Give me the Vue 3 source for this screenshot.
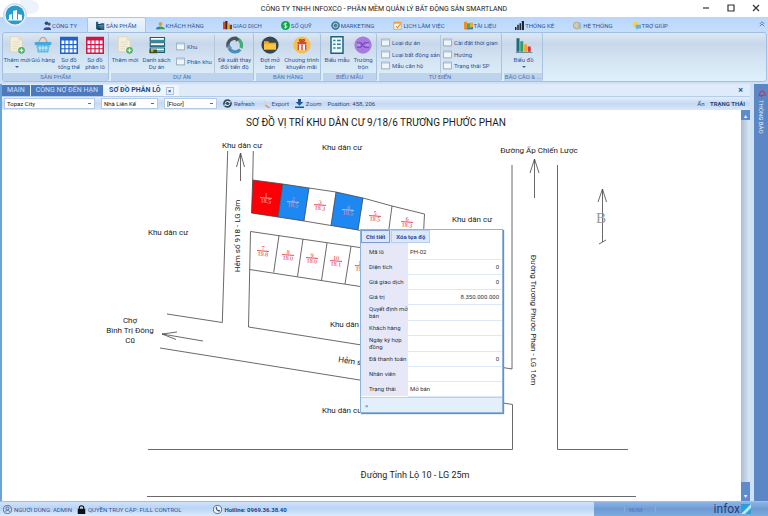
<script setup>
import { ref } from 'vue'

const icons = {
  people: '<circle cx="6" cy="3" r="2.4" fill="#3a3f78"/><path d="M2 12c0-5 8-5 8 0z" fill="#2f4f9c"/><circle cx="9.5" cy="4" r="2" fill="#5b4a60"/><path d="M6 12c0-5 6-5 6 0z" fill="#34477e"/>',
  building: '<path d="M0 1h3v10H0z" fill="#2b5f86"/><path d="M2 4h5v8H2z" fill="#173a55"/><path d="M6 3h5v9H6z" fill="#24607c"/><path d="M3 6h7M3 8h7" stroke="#5aa3bd"/>',
  customer: '<circle cx="6" cy="4" r="2.6" fill="#d9a13a"/><path d="M0 11c1-5 11-5 12 0z" fill="#3f9a4a"/><path d="M0 11c0-3 3-4 5-3v3z" fill="#2c7fc0"/>',
  books: '<path d="M0 1h3v10H0z" fill="#d84a1e"/><path d="M3 0h3v11H3z" fill="#2b2b32"/><path d="M6 3h3v8H6z" fill="#f0a325"/><path d="M9 5h3v6H9z" fill="#7a3f1d"/>',
  money: '<circle cx="6" cy="6" r="6" fill="#16a34a"/><path d="M8 4c-1-1.500-4-1-4 .5S8 6 8 7.500 5 9.500 4 8M6 2v8" stroke="#fff" fill="none"/>',
  globe: '<circle cx="6" cy="6" r="5.500" fill="#4b7f96"/><circle cx="6" cy="6" r="3" fill="none" stroke="#b5dcca" stroke-width="1.200"/><circle cx="6" cy="6" r="5" fill="none" stroke="#3a6377" stroke-dasharray="2 1"/>',
  calendar: '<path d="M1 2h10v9H1z" fill="#f5f1dc" stroke="#a5a58a"/><path d="M1 1h10v2.500H1z" fill="#e5a238"/><path d="M4 7l2 2 4-5" stroke="#d9822b" fill="none" stroke-width="1.400"/>',
  docs: '<path d="M0 1h4v10H0z" fill="#e98f2c"/><path d="M4 3h4v8H4z" fill="#55a651"/><path d="M8 2h4v9H8z" fill="#d6b42f"/><path d="M1 11h11V8z" fill="#3d72b5"/>',
  bars: '<path d="M0 8h2v4H0zM3 5h2v7H3zM6 3h2v9H6zM9 0h3v12H9z" fill="#1c2733"/>',
  gear: '<circle cx="5" cy="6" r="4.500" fill="#d8cba2" stroke="#9a9886"/><path d="M7 1l4 2v7l-4 1z" fill="#a9b8c8"/>',
  help: '<circle cx="5" cy="5" r="4" fill="#f6d24a"/><path d="M5 5h7v5H8l-2 2V10H5z" fill="#62b3df"/>',
  docAdd: '<path d="M3 1h11l5 5v15H3z" fill="#f3efda" stroke="#d8d2b6"/><path d="M14 1v5h5" fill="#e3dcc0"/><path d="M6 8h9M6 11h10M6 14h8M6 17h6" stroke="#ddd6bd"/><circle cx="18" cy="19" r="4.500" fill="#52b167"/><path d="M18 16.500v5M15.500 19h5" stroke="#fff" stroke-width="1.500"/>',
  basket: '<path d="M5 10L10 2h4l5 8" fill="none" stroke="#d99a5b" stroke-width="1.600"/><path d="M1 8h22v4H1z" fill="#49a9d6"/><path d="M3 12h18l-2 10H5z" fill="#5fbce4"/><path d="M8 13v7M12 13v7M16 13v7M5 16h14" stroke="#d8f1fb" stroke-width="1.200"/>',
  gridBlue: '<path d="M1 2h22v21H1z" fill="#fff" stroke="#1e62c8" stroke-width="2"/><path d="M1 2h22v4H1z" fill="#1e62c8"/><path d="M6.500 4v19M12 4v19M17.500 4v19M1 11.500h22M1 17h22" stroke="#1e62c8" stroke-width="1.500"/>',
  gridRed: '<path d="M1 2h22v21H1z" fill="#fff" stroke="#cf1447" stroke-width="2"/><path d="M1 2h22v4H1z" fill="#cf1447"/><path d="M6.500 4v19M12 4v19M17.500 4v19M1 11.500h22M1 17h22" stroke="#cf1447" stroke-width="1.500"/>',
  list: '<path d="M3 2h19v5H3zM3 9h19v5H3zM3 16h19v6H3z" fill="#fff" stroke="#1d5a70" stroke-width="1.500"/><path d="M4 6h18M4 13h18M4 20h18" stroke="#2793a8" stroke-width="2"/><path d="M2 18h10v5H2z" fill="#3b5426"/><path d="M4 18h3v3H4z" fill="#d9b23b"/>',
  cycle: '<g fill="none" stroke-width="4.500"><path d="M3 15A9 9 0 0 1 14 3.500" stroke="#4a5560"/><path d="M15 4a9 9 0 0 1 5 12" stroke="#3cae76"/><path d="M19 18A9 9 0 0 1 4 16" stroke="#4b8fb8"/></g><path d="M13 0l5 4-5 4z" fill="#4a5560"/><path d="M1 15l3-4 4 5z" fill="#4b8fb8"/>',
  sale: '<circle cx="12" cy="12" r="11.500" fill="#37474f"/><path d="M4 7h6l1 2h9v9H4z" fill="#f6a821"/><path d="M4 11h16v7H4z" fill="#ffc53d"/>',
  gift: '<circle cx="12" cy="12" r="11.500" fill="#f6c04c"/><path d="M6 10h12v9H6z" fill="#fff"/><path d="M6 8h12v3H6z" fill="#d84b3a"/><path d="M6 11h2v8H6zM11 11h2v8h-2zM16 11h2v8h-2z" fill="#d84b3a"/><path d="M12 8c-5-1-4-5 0-2 4-3 5 1 0 2z" fill="none" stroke="#b5352b" stroke-width="1.500"/>',
  form: '<path d="M4 1h16v22H4z" fill="#eaf7fa" stroke="#20617a" stroke-width="2"/><path d="M7 6h3M12 6h5M7 11h3M12 11h5M7 16h3M12 16h5" stroke="#2b8199" stroke-width="1.800"/>',
  merge: '<circle cx="12" cy="12" r="11.500" fill="#a77be0"/><path d="M4 9h5l5 6h6M4 15h5l5-6h6" stroke="#7346b8" stroke-width="1.600" fill="none"/><path d="M4 12h4M16 12h4" stroke="#d8c4f5"/>',
  chart: '<path d="M2 3h4v18H2z" fill="#1c6b7a"/><path d="M7 7h4v14H7z" fill="#2f9e6b"/><path d="M12 11h4v10h-4z" fill="#f2a33a"/><path d="M17 14h4v7h-4z" fill="#d8382e"/><path d="M1 22h22" stroke="#50708a"/>',
  window: '<path d="M.5 1.500h11v9H.5z" fill="#f0f5fa" stroke="#7f95ad"/><path d="M1 2h10v1.500H1z" fill="#b9cbe0"/>',
  refresh: '<circle cx="6" cy="6" r="5.800" fill="#2e4f66"/><path d="M3 6a3 3 0 0 1 5-2M9 6a3 3 0 0 1-5 2" stroke="#fff" fill="none" stroke-width="1.300"/><path d="M7 5h3V2zM5 7H2v3z" fill="#fff"/>',
  export: '<path d="M4 1l6 9-6-1z" fill="#cfd6dd"/><path d="M6 8l3 3h3" stroke="#e08a3a" stroke-width="1.500" fill="none"/>',
  download: '<path d="M4 0h4v4h3L6 9 1 4h3z" fill="#1c5a96"/><path d="M0 10h12v2H0z" fill="#1c5a96"/>',
  user: '<circle cx="6" cy="6" r="5.400" fill="none" stroke="#3d5878" stroke-width="1"/><circle cx="6" cy="4.500" r="2" fill="none" stroke="#3d5878"/><path d="M2.500 9.500c1-3 6-3 7 0" fill="none" stroke="#3d5878"/>',
  lock: '<path d="M1 5h10v7H1z" fill="#111"/><path d="M3 6V4a3 3 0 0 1 6 0v2" fill="none" stroke="#111" stroke-width="1.500"/>',
  phone: '<circle cx="6" cy="6" r="5.400" fill="#eef5fc" stroke="#2c4a6c"/><path d="M3.500 3c0 3 2 5.500 5 6l1-1.600-1.700-1-.8.700C6 6.600 5.300 5.800 5 5l.8-.8L5 2.500z" fill="#2c4a6c"/>',
  bell: '<path d="M2 9c2-1 1-5 4-6s4 3 6 5z" fill="none" stroke="#d0305e" stroke-width="1.500"/><path d="M5 10l2 1" stroke="#d0305e" stroke-width="1.500"/>',
}

const tabs = [
  ['people', 'CÔNG TY'], ['building', 'SẢN PHẨM'], ['customer', 'KHÁCH HÀNG'], ['books', 'GIAO DỊCH'],
  ['money', 'SỔ QUỸ'], ['globe', 'MARKETING'], ['calendar', 'LỊCH LÀM VIỆC'], ['docs', 'TÀI LIỆU'],
  ['bars', 'THỐNG KÊ'], ['gear', 'HỆ THỐNG'], ['help', 'TRỢ GIÚP'],
]
const activeTab = ref('SẢN PHẨM')

const big = (icon, lines, o = {}) => ({ icon, lines, ...o })
const groups = [
  { title: 'SẢN PHẨM', items: [
    big('docAdd', ['Thêm mới'], { menu: true }), big('basket', ['Giỏ hàng']),
    big('gridBlue', ['Sơ đồ', 'tổng thể']), big('gridRed', ['Sơ đồ', 'phân lô'])] },
  { title: 'DỰ ÁN', items: [
    big('docAdd', ['Thêm mới']), big('list', ['Danh sách', 'Dự án'], { wide: true }),
    { stack: ['Khu', 'Phân khu'] }, { sep: true },
    big('cycle', ['Đề xuất thay', 'đổi tiến độ'], { wide: true })] },
  { title: 'BÁN HÀNG', items: [
    big('sale', ['Đợt mở', 'bán']), big('gift', ['Chương trình', 'khuyến mãi'], { wide: true })] },
  { title: 'BIỂU MẪU', items: [big('form', ['Biểu mẫu']), big('merge', ['Trường', 'trộn'])] },
  { title: 'TỪ ĐIỂN', items: [
    { stack: ['Loại dự án', 'Loại bất động sản', 'Mẫu căn hộ'], wide: true }, { sep: true },
    { stack: ['Cài đặt thời gian', 'Hướng', 'Trạng thái SP'], wide: true }] },
  { title: 'BÁO CÁO & ...', items: [big('chart', ['Biểu đồ'], { menu: true, wide: true })] },
]

const lots = [
  { n: 1, area: '18.5', x: 266, y: 198, tone: 'on-red' },
  { n: 2, area: '18.5', x: 293, y: 202, tone: 'on-blue' },
  { n: 3, area: '18.3', x: 320, y: 205, tone: 'plain' },
  { n: 4, area: '18.5', x: 348, y: 210, tone: 'on-blue' },
  { n: 5, area: '18.5', x: 375, y: 216, tone: 'plain' },
  { n: 6, area: '18.3', x: 407, y: 222, tone: 'plain' },
  { n: 7, area: '19.8', x: 263, y: 251, tone: 'plain' },
  { n: 8, area: '18.0', x: 288, y: 255, tone: 'plain' },
  { n: 9, area: '18.0', x: 312, y: 258, tone: 'plain' },
  { n: 10, area: '18.1', x: 336, y: 261, tone: 'plain' },
  { n: 11, area: '19.8', x: 361, y: 266, tone: 'plain' },
]

const details = [
  ['Mã lô', 'PH-02'], ['Diện tích', '0', 1], ['Giá giao dịch', '0', 1], ['Giá trị', '8.350.000.000', 1],
  ['Quyết định mở bán', ''], ['Khách hàng', ''], ['Ngày ký hợp đồng', ''],
  ['Đã thanh toán', '0', 1], ['Nhân viên', ''], ['Trạng thái', 'Mở bán'],
]
</script>

<template>
  <div class="app">
    <header class="titlebar">
      <h1>CÔNG TY TNHH INFOXCO - PHẦN MỀM QUẢN LÝ BẤT ĐỘNG SẢN SMARTLAND</h1>
      <div class="winbtns">
        <button aria-label="Minimize"><svg viewBox="0 0 10 10"><path d="M2.500 5h5" /></svg></button>
        <button aria-label="Maximize"><svg viewBox="0 0 10 10"><path d="M2.500 2.500h5v5h-5z" /></svg></button>
        <button aria-label="Close"><svg viewBox="0 0 10 10"><path d="M2.500 2.500l5 5M7.500 2.500l-5 5" /></svg></button>
      </div>
      <button class="orb" aria-label="SmartLand">
        <svg viewBox="0 0 40 28">
          <path d="M20 0h10a9 7 0 0 1 0 14H20z" fill="#edf3fa" />
          <circle cx="15" cy="15" r="12" fill="#d3deea" />
          <circle cx="15" cy="15" r="10.500" fill="#f4f9fc" />
          <circle cx="15" cy="15" r="9.500" fill="#2a9ccc" />
          <path d="M9 15l3-1v6H9zM13 11l4-1v10h-4zM18 14l4 1v5h-4z" fill="#fff" />
          <path d="M8 20h14" stroke="#fff" />
        </svg>
      </button>
    </header>

    <nav class="tabs">
      <button v-for="[icon, label] in tabs" :key="label" :class="{ active: label === activeTab }" @click="activeTab = label">
        <svg class="i9" viewBox="0 0 12 12" v-html="icons[icon]" />{{ label }}
      </button>
      <span class="collapse"><svg viewBox="0 0 8 8"><path d="M1 4l3-3 3 3M1 7l3-3 3 3" /></svg></span>
    </nav>

    <section class="ribbon">
      <div v-for="g in groups" :key="g.title" class="group">
        <div class="items">
          <template v-for="(it, i) in g.items" :key="i">
            <span v-if="it.sep" class="sep" />
            <div v-else-if="it.stack" class="stack" :class="{ roomy: it.wide }">
              <button v-for="s in it.stack" :key="s"><svg class="i9" viewBox="0 0 12 12" v-html="icons.window" />{{ s }}</button>
            </div>
            <button v-else class="cmd" :class="{ wide: it.wide }">
              <svg viewBox="0 0 24 24" v-html="icons[it.icon]" />
              <span v-for="l in it.lines" :key="l">{{ l }}</span>
              <i v-if="it.menu" class="caret" />
            </button>
          </template>
        </div>
        <footer>{{ g.title }}</footer>
      </div>
    </section>

    <div class="body">
      <main>
        <div class="doctabs">
          <button>MAIN</button>
          <button>CÔNG NỢ ĐẾN HẠN</button>
          <button class="active">SƠ ĐỒ PHÂN LÔ <span class="x">×</span></button>
          <span class="closeall">×</span>
        </div>

        <div class="toolbar">
          <select class="s-project" aria-label="Dự án"><option>Topaz City</option></select>
          <select class="s-type" aria-label="Loại"><option>Nhà Liên Kế</option></select>
          <select class="s-floor" aria-label="Tầng"><option>[Floor]</option></select>
          <button><svg class="i9" viewBox="0 0 12 12" v-html="icons.refresh" />Refresh</button>
          <button><svg class="i9" viewBox="0 0 12 12" v-html="icons.export" />Export</button>
          <button><svg class="i9" viewBox="0 0 12 12" v-html="icons.download" />Zoom</button>
          <span>Position: 458, 206</span>
          <span class="status-head">Ẩn <b>TRẠNG THÁI</b></span>
        </div>

        <div class="canvas">
          <div class="sheet">
            <svg class="map" viewBox="2 110 739 391">
              <path class="red" d="M252.700 180L282.700 184L278 217L251.500 213z" />
              <path class="blue" d="M282.700 184L309 188L304 221L278 217zM336 192L363 198L358 230L331 225.500z" />
              <g class="ln">
                <path d="M227.700 151L222.300 322.500L167 314" />
                <path d="M253.300 151L252.700 180L282.700 184L309 188L336 192L363 198L392 206L424.500 214L423 243L358 230L331 225.500L304 221L278 217L251.500 213L252.700 180" />
                <path d="M282.700 184L278 217M309 188L304 221M336 192L331 225.500M363 198L358 230M392 206L388 236" />
                <path d="M370 249L250.500 231.500L248.500 327L512 369V165" />
                <path d="M249.500 269.500L370 288M279 235.500L273.700 272.500M303 239L297.500 276.500M327 243L321.500 280.500M351 246.500L345 284" />
                <path d="M160 348L512.500 404.500V449.500H148M557.500 165V449.500H628M147 496.500H636" />
                <path d="M240.500 181V153M236.500 167L240.500 153L244.500 167" />
                <path d="M203 341L162 334M177 332L162 334L176 339.500" />
                <path d="M534.500 198V159M530 173L534.500 159L539 173" />
                <path d="M602.500 242V189M598 202L602.500 189L606.500 202M599 244L606 240" />
              </g>
              <text class="north" x="601" y="223">B</text>
              <text class="title" x="376" y="126">SƠ ĐỒ VỊ TRÍ KHU DÂN CƯ 9/18/6 TRƯƠNG PHƯỚC PHAN</text>
              <g class="lbl">
                <text x="242" y="148">Khu dân cư</text>
                <text x="342" y="150">Khu dân cư</text>
                <text x="168" y="235">Khu dân cư</text>
                <text x="472" y="222">Khu dân cư</text>
                <text x="350" y="327">Khu dân cư</text>
                <text x="342" y="413">Khu dân cư</text>
                <text x="539" y="153">Đường Ấp Chiến Lược</text>
                <text x="130" y="323">Chợ</text>
                <text x="130" y="333">Bình Trị Đông</text>
                <text x="130" y="343">Cũ</text>
                <text transform="translate(240 236) rotate(-90)">Hẻm số 918 - LG 3m</text>
                <text transform="translate(531 320) rotate(90)">Đường Trương Phước Phan - LG 16m</text>
                <text class="start" transform="translate(338 362) rotate(8)">Hẻm số 918</text>
              </g>
              <text class="road" x="415" y="478">Đường Tỉnh Lộ 10 - LG 25m</text>
              <g v-for="l in lots" :key="l.n" class="lot" :class="l.tone" :transform="`translate(${l.x} ${l.y}) rotate(4)`">
                <text y="-1">{{ l.n }}</text>
                <path d="M-6 0H6" />
                <text y="5">{{ l.area }}</text>
              </g>
            </svg>

            <section class="popup">
              <div class="actions"><button>Chi tiết</button><button>Xóa tọa độ</button></div>
              <table>
                <tbody>
                  <tr v-for="[k, v, num] in details" :key="k">
                    <th scope="row">{{ k }}</th>
                    <td :class="{ num }">{{ v }}</td>
                  </tr>
                </tbody>
              </table>
              <footer>×</footer>
            </section>
          </div>
          <div class="scroll"><button aria-label="Lên">▴</button><button class="down" aria-label="Xuống">▾</button></div>
        </div>
      </main>
      <aside><svg class="i9" viewBox="0 0 12 12" v-html="icons.bell" /><span>THÔNG BÁO</span></aside>
    </div>

    <footer class="status">
      <span><svg class="i9" viewBox="0 0 12 12" v-html="icons.user" />NGƯỜI DÙNG: ADMIN</span>
      <span><svg class="i9" viewBox="0 0 12 12" v-html="icons.lock" />QUYỀN TRUY CẬP: FULL CONTROL</span>
      <b><svg class="i9" viewBox="0 0 12 12" v-html="icons.phone" />Hotline: 0969.36.38.40</b>
      <div class="keys">
        <span class="num">NUM</span>
        <span class="brand">infox<svg viewBox="0 0 10 10"><path d="M0 0h10v10H0z" fill="#2a9fdc" /><path d="M0 10L10 0v4L4 10z" fill="#bfe6fa" /></svg></span>
      </div>
    </footer>
  </div>
</template>

<style>
body { margin: 0; background: #fff; }
</style>

<style scoped>
* { box-sizing: border-box; }
.app {
  min-height: 100vh;
  display: flex;
  flex-direction: column;
  font: 6px/7px Roboto, "Noto Sans", sans-serif;
  color: #2f5596;
  background: #cfe1f7;
}
button {
  font: inherit;
  color: inherit;
  background: none;
  border: 0;
  padding: 0;
  margin: 0;
  white-space: nowrap;
}
svg { display: block; flex: none; }
.i9 { width: 9px; height: 9px; }

.titlebar {
  position: relative;
  height: 17px;
  background: #fff;
  display: flex;
  align-items: center;
  justify-content: center;
}
.titlebar h1 { margin: 0; font-size: 7px; line-height: 10px; font-weight: 400; color: #222; }
.winbtns { position: absolute; right: 0; top: 2px; display: flex; }
.winbtns button { width: 25px; display: flex; justify-content: center; }
.winbtns svg { width: 12px; height: 12px; fill: none; stroke: #333; stroke-width: 1; }
.orb { position: absolute; left: 0; top: 0; z-index: 2; }
.orb svg { width: 40px; height: 28px; }

.tabs {
  display: flex;
  height: 15px;
  padding-left: 33px;
  gap: 1px;
  background: linear-gradient(#b9d6fb, #c6defc);
}
.tabs button {
  display: flex;
  align-items: center;
  gap: 1px;
  padding: 0 8px;
  border: 1px solid transparent;
  border-bottom: 0;
  border-radius: 2px 2px 0 0;
}
.tabs .active { background: linear-gradient(#eef5fd, #dce9f7); border-color: #a9c6e8; }
.collapse { margin-left: auto; padding: 4px 3px; }
.collapse svg { width: 6px; height: 6px; fill: none; stroke: #3c64a0; }

.ribbon {
  display: flex;
  gap: 2px;
  height: 50px;
  margin: 0 1px 2px 2px;
  border: 1px solid #a3bfdf;
  border-radius: 3px;
  background: linear-gradient(#dde8f4, #c8d8ea 22%, #d4e4f3 55%, #def1f9);
}
.group {
  display: flex;
  flex-direction: column;
  border-right: 1px solid #a9c2df;
  border-radius: 2px;
}
.group footer {
  height: 8px;
  text-align: center;
  background: #bdd3ee;
  color: #4d74ad;
  white-space: nowrap;
}
.items { flex: 1; display: flex; padding: 2px 0 0 1px; }
.cmd { width: 26px; display: flex; flex-direction: column; align-items: center; }
.cmd.wide { width: 37px; }
.cmd svg { width: 18px; height: 18px; margin: 1px 0 2px; }
.caret { margin-top: 3px; border: 2px solid transparent; border-top-color: #3c5f95; border-bottom: 0; }
.sep { width: 1px; margin: 0 1px; background: #b3c8e0; }
.stack { width: 38px; display: flex; flex-direction: column; justify-content: space-evenly; padding-left: 1px; }
.stack.roomy { width: 59px; }
.stack button { display: flex; align-items: center; gap: 2px; }

.body { flex: 1; display: flex; background: #dfebf9; border-left: 2px solid #6ba3d6; }
main { flex: 1; min-width: 0; display: flex; flex-direction: column; }
.doctabs { display: flex; align-items: flex-end; height: 12px; gap: 1px; }
.doctabs button { height: 11px; padding: 0 5px; background: #4d79bd; color: #cfe0f6; font-size: 7px; }
.doctabs .active { display: flex; align-items: center; gap: 5px; background: #eff5fd; color: #1d4a8d; font-weight: 700; }
.x { border: 1px solid #a9c3e4; width: 8px; line-height: 6px; font-size: 6px; }
.closeall { margin: 0 7px 2px auto; font-weight: 700; font-size: 9px; }
.toolbar {
  display: flex;
  align-items: center;
  gap: 6px;
  height: 14px;
  padding: 0 5px 0 2px;
  border-top: 1px solid #b6cdea;
  background: linear-gradient(#e4eefa, #c5d9f2 50%, #d9e8fa);
  white-space: nowrap;
}
.toolbar button { display: flex; align-items: center; gap: 2px; }
.toolbar span { color: #28477c; }
.toolbar .status-head { margin-left: auto; }
.status-head b { padding-left: 4px; }
select {
  appearance: none;
  height: 11px;
  padding: 0 2px;
  border: 1px solid #b3cbe8;
  border-radius: 0;
  font: inherit;
  color: #111;
  background:
    linear-gradient(#4d6f9f, #4d6f9f) right 3px center / 3px 1px no-repeat,
    #fff;
}
.s-project { width: 91px; }
.s-type { width: 57px; }
.s-floor { width: 53px; }

.canvas { flex: 1; display: flex; background: #fff; }
.sheet { position: relative; flex: 1; min-width: 0; }
.map { width: 100%; height: auto; }
.map text { text-anchor: middle; fill: #1c1c1c; }
.ln { fill: none; stroke: #444; stroke-width: 0.8; }
.red { fill: #fb0007; }
.blue { fill: #1e88f2; }
.title { font-size: 10px; }
.lbl { font-size: 8px; }
.lbl .start { text-anchor: start; }
.road { font-size: 9px; }
.map .north { font: 15px "Liberation Serif", serif; fill: #999; }
.lot text { font: 6px "Liberation Serif", serif; fill: #e02030; }
.lot path { stroke: #e02030; stroke-width: 0.8; }
.lot.on-red text { fill: #ffc9c4; }
.lot.on-red path { stroke: #ffc9c4; }
.lot.on-blue text { fill: #f0899c; }
.lot.on-blue path { stroke: #c9d8f5; }

.popup {
  position: absolute;
  left: 358px;
  top: 119px;
  width: 143px;
  border: 1px solid #8db4dd;
  background: #fff;
  box-shadow: 1px 1px 1px #6d8fb5;
  color: #333;
}
.actions { display: flex; gap: 1px; height: 14px; background: linear-gradient(90deg, #dfe3f6 47px, #fff 47px); }
.actions button {
  height: 13px;
  padding: 0 4px;
  border: 1px solid #7d9bd6;
  background: #dbe8fa;
  color: #24489c;
  font-weight: 700;
}
.actions button + button { border-color: #b9cdf0; }
table { width: 100%; border-collapse: collapse; table-layout: fixed; }
tr { height: 15px; }
th {
  width: 47px;
  padding: 1px 0 1px 8px;
  background: #e6e8f8;
  text-align: left;
  font-weight: 400;
}
td { padding: 0 3px 0 2px; border-bottom: 1px solid #dbe8f6; }
td.num { text-align: right; }
.popup footer { height: 15px; padding: 4px; border-top: 1px solid #b7d0ec; background: #e4effc; color: #4b75b5; }

.scroll {
  width: 9px;
  display: flex;
  flex-direction: column;
  justify-content: space-between;
  background: linear-gradient(90deg, #a9bed8, #dbe6f2);
}
.scroll button { height: 10px; background: #5f8cc8; color: #fff; font-size: 6px; }
.scroll .down { height: 19px; padding-top: 8px; }
aside {
  width: 18px;
  display: flex;
  flex-direction: column;
  align-items: center;
  gap: 2px;
  padding-top: 5px;
  border-left: 4px solid #cfe1f7;
  background: #5b87c5;
  color: #e6effb;
}
aside span { writing-mode: vertical-rl; }

.status {
  display: flex;
  align-items: center;
  height: 15px;
  padding-left: 3px;
  gap: 5px;
  border-top: 1px solid #9fc0e6;
  background: linear-gradient(#cfe2f9, #b9d4f6 45%, #dcebfc);
  white-space: nowrap;
}
.status > span, .status b { display: flex; align-items: center; gap: 2px; }
.status b { margin-left: 27px; color: #1c4587; }
.keys {
  margin-left: auto;
  width: 174px;
  height: 100%;
  display: flex;
  align-items: center;
  justify-content: space-between;
  padding: 0 17px 0 30px;
  background: linear-gradient(#8db4e4, #6e9bd5 50%, #7fa9df);
}
.keys .num { width: 32px; padding: 0 4px; border: 1px solid #86abdc; border-width: 0 1px; color: #5079b5; }
.brand { display: flex; align-items: center; gap: 1px; font-size: 12px; line-height: 14px; color: #1e3f7c; }
.brand svg { width: 10px; height: 10px; }
</style>
